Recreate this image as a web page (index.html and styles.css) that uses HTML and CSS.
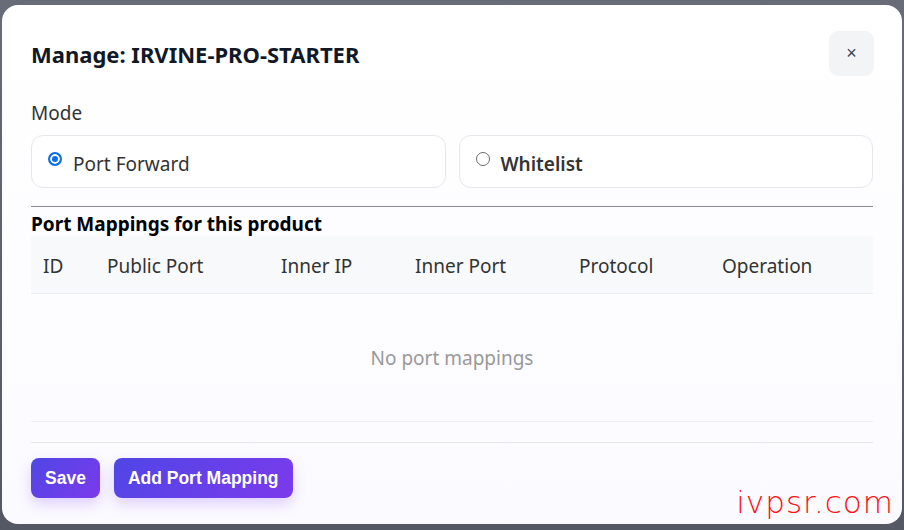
FILE: index.html
```html
<!DOCTYPE html>
<html>
<head>
	<title>Manage</title>
	<meta charset="utf-8">
	<link rel="stylesheet" href="styles.css">
</head>
<body>
<div class="modal">
	<div class="modal-head">
		<h2>Manage: IRVINE-PRO-STARTER</h2>
		<button class="close">&times;</button>
	</div>

	<div class="label">Mode</div>
	<div class="modes">
		<label class="mode">
			<span class="radio on"></span>
			<span>Port Forward</span>
		</label>
		<label class="mode">
			<span class="radio"></span>
			<span class="strong">Whitelist</span>
		</label>
	</div>

	<hr>

	<h3>Port Mappings for this product</h3>
	<table class="maps">
		<thead>
			<tr>
				<th class="c-id">ID</th>
				<th class="c-pub">Public Port</th>
				<th class="c-ip">Inner IP</th>
				<th class="c-in">Inner Port</th>
				<th class="c-proto">Protocol</th>
				<th>Operation</th>
			</tr>
		</thead>
		<tbody>
			<tr>
				<td class="empty" colspan="6">No port mappings</td>
			</tr>
		</tbody>
	</table>

	<div class="modal-foot">
		<button class="btn">Save</button>
		<button class="btn">Add Port Mapping</button>
		<span class="mark">ivpsr.com</span>
	</div>
</div>
</body>
</html>
```

FILE: styles.css
```css
*{
	margin: 0px;
	padding: 0px;
	box-sizing: border-box;
}
body{
	height: 530px;
	overflow: hidden;
	background: linear-gradient(#686c78, #545864);
	font-family: "Noto Sans", "Open Sans", sans-serif;
	color: #333;
}
.modal{
	position: relative;
	margin: 5px 2px 0;
	height: 519px;
	padding: 26px 29px 0;
	border-radius: 16px;
	background: linear-gradient(#ffffff, #fbfaff);
}
.modal-head{
	display: flex;
	justify-content: space-between;
	align-items: center;
}
.modal-head h2{
	font-size: 22px;
	font-weight: 700;
	color: #111827;
}
.close{
	width: 45px;
	height: 45px;
	margin-right: -1px;
	border: none;
	border-radius: 9px;
	background-color: #f3f4f6;
	color: #374151;
	font-size: 18px;
	font-family: "Liberation Sans", sans-serif;
}
.label{
	margin-top: 25px;
	font-size: 19px;
	line-height: 24px;
}
.modes{
	display: flex;
	gap: 13px;
	margin-top: 10px;
}
.mode{
	flex: 1;
	display: flex;
	align-items: center;
	gap: 11px;
	height: 53px;
	padding: 4px 0 0 16px;
	border: 1px solid #e5e7eb;
	border-radius: 12px;
	background-color: #fff;
	font-size: 19px;
}
.mode .strong{
	font-weight: 600;
}
.radio{
	width: 14px;
	height: 14px;
	margin-top: -9px;
	border: 1px solid #6b6b6b;
	border-radius: 50%;
	background-color: #fff;
}
.radio.on{
	border: 2px solid #0b6cf0;
	box-shadow: inset 0 0 0 2px #fff;
	background-color: #0b6cf0;
}
hr{
	margin-top: 18px;
	border: none;
	border-top: 1px solid #8a8a8a;
}
h3{
	margin-top: 5px;
	font-size: 19px;
	line-height: 24px;
	font-weight: 700;
	color: #000;
}
.maps{
	width: 100%;
	border-collapse: collapse;
	font-size: 19px;
}
.maps th{
	height: 57px;
	padding: 3px 12px 0;
	text-align: left;
	font-weight: 400;
	background-color: #f8f9fb;
	border-bottom: 1px solid #eceef1;
}
.maps .c-id{ width: 64px; }
.maps .c-pub{ width: 174px; }
.maps .c-ip{ width: 134px; }
.maps .c-in{ width: 164px; }
.maps .c-proto{ width: 143px; }
.maps td.empty{
	height: 128px;
	padding-top: 2px;
	text-align: center;
	color: #999;
	border-bottom: 1px solid #eceef1;
}
.modal-foot{
	display: flex;
	gap: 14px;
	margin-top: 20px;
	padding-top: 15px;
	border-top: 1px solid #e6e7ea;
}
.btn{
	height: 40px;
	padding: 2px 14px 0;
	border: none;
	border-radius: 8px;
	background: linear-gradient(135deg, #4f46e5, #7c3aed);
	box-shadow: 0 6px 14px rgba(124, 58, 237, 0.22);
	color: #fff;
	font-family: "Liberation Sans", Arial, sans-serif;
	font-size: 17.5px;
	font-weight: 700;
}
.mark{
	position: absolute;
	right: 8px;
	bottom: 4px;
	color: #ff1010;
	font-family: "DejaVu Sans", sans-serif;
	font-weight: 200;
	font-size: 31px;
	letter-spacing: 1px;
}
```
